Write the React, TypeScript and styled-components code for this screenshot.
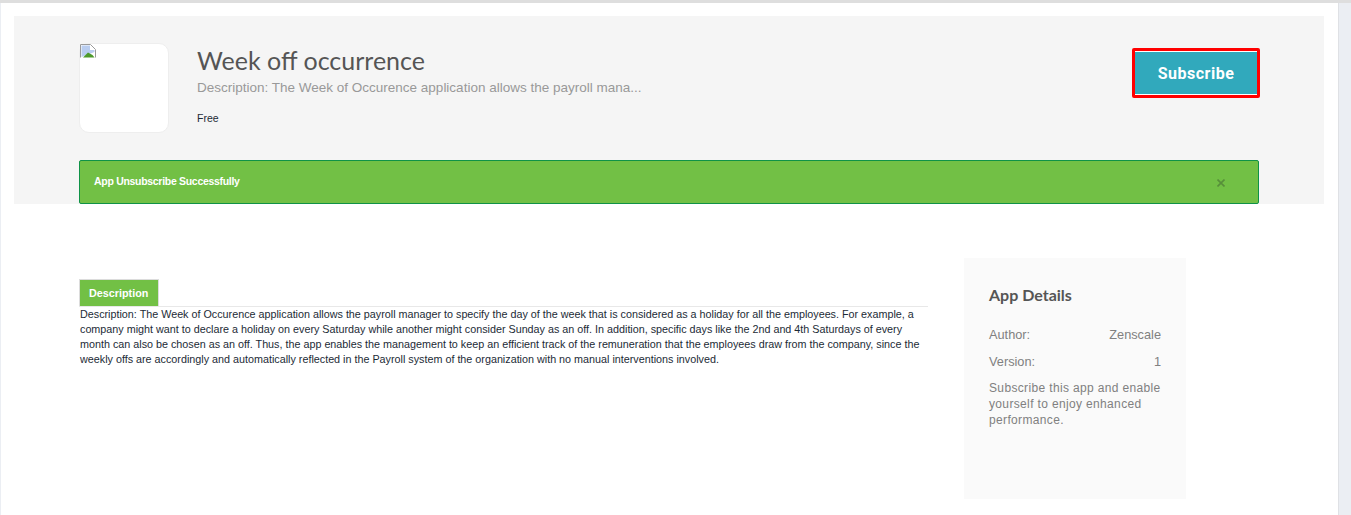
import styled, { createGlobalStyle } from "styled-components";
import { useState } from "react";

const GlobalStyle = createGlobalStyle`
  html, body {
    margin: 0;
    padding: 0;
    height: 515px;
    overflow: hidden;
    background: #ebeef3;
    font-family: "Liberation Sans", Arial, sans-serif;
  }
`;

const TopEdge = styled.div`
  height: 3px;
  background: #dedede;
`;

const Page = styled.div`
  width: 1338px;
  height: 512px;
  margin-left: 1px;
  box-sizing: border-box;
  padding: 13px 14px 0 13px;
  background: #fff;
  border-right: 1px solid #dfe1e5;
`;

const Hero = styled.section`
  height: 188px;
  box-sizing: border-box;
  padding: 27px 65px 0;
  background: #f5f5f5;
`;

const HeroRow = styled.div`
  display: flex;
  align-items: flex-start;
  height: 117px;
`;

const AppIcon = styled.div`
  width: 90px;
  height: 90px;
  flex: none;
  box-sizing: border-box;
  background: #fff;
  border: 1px solid #eeeeee;
  border-radius: 10px;
  margin-right: 28px;
`;

const AppInfo = styled.div`
  flex: 1;
  min-width: 0;
`;

const Title = styled.h1`
  margin: 1px 0 0;
  font-family: Lato, sans-serif;
  font-weight: 400;
  font-size: 25px;
  line-height: 32px;
  color: #555;
`;

const Summary = styled.p`
  margin: 2px 0 0;
  font-size: 13.5px;
  line-height: 20px;
  color: #999;
`;

const Price = styled.p`
  margin: 12px 0 0;
  font-size: 10.5px;
  line-height: 16px;
  color: #1c2b36;
`;

const SubscribeButton = styled.button`
  width: 128px;
  height: 50px;
  flex: none;
  margin: 5px -1px 0 0;
  box-sizing: border-box;
  padding: 0;
  border: 3px solid #ff0000;
  border-radius: 2px;
  background: #31a9bc;
  box-shadow: inset 0 1px 0 #fff, inset 0 -1px 0 #fff;
  color: #fff;
  font-family: Roboto, sans-serif;
  font-weight: 700;
  font-size: 16px;
  letter-spacing: 0.5px;
  cursor: pointer;
`;

const Alert = styled.div`
  height: 44px;
  box-sizing: border-box;
  display: flex;
  align-items: center;
  justify-content: space-between;
  padding: 0 33px 2px 14px;
  background: #72c045;
  border: 1px solid #0f9247;
  border-radius: 2px;
  color: #fff;
  font-size: 10.5px;
  letter-spacing: -0.3px;
  font-weight: 700;
`;

const CloseIcon = styled.svg`
  width: 8px;
  height: 8px;
  margin-top: 4px;
  stroke: #578f3a;
  stroke-width: 1.6;
`;

const Body = styled.div`
  display: flex;
  align-items: flex-start;
  padding: 54px 0 0 65px;
`;

const Main = styled.main`
  width: 849px;
  padding-top: 21px;
`;

const TabBar = styled.div`
  display: flex;
  border-bottom: 1px solid #e8e8e8;
`;

const Tab = styled.div`
  height: 27px;
  width: 80px;
  box-sizing: border-box;
  padding: 0 0 1px 9px;
  display: flex;
  align-items: center;
  background: #72c045;
  border: 1px solid #dcdcdc;
  border-bottom: none;
  color: #fff;
  font-size: 10.8px;
  font-weight: 700;
`;

const Text = styled.p`
  margin: 0;
  padding: 0 6px 0 1px;
  font-size: 10.78px;
  line-height: 15px;
  color: #1c2b36;
`;

const Sidebar = styled.aside`
  width: 222px;
  height: 241px;
  flex: none;
  box-sizing: border-box;
  margin-left: 36px;
  padding: 27px 25px 0;
  background: #fafafa;
`;

const SidebarTitle = styled.h2`
  margin: 0 0 22px;
  font-family: Lato, sans-serif;
  font-weight: 700;
  font-size: 16px;
  line-height: 20px;
  color: #555;
`;

const DetailRow = styled.div`
  display: flex;
  justify-content: space-between;
  margin-bottom: 11px;
  font-size: 12.75px;
  line-height: 16px;
  color: #808080;
`;

const Note = styled.p`
  margin: -1px -6px 0 0;
  font-size: 12px;
  line-height: 16px;
  letter-spacing: 0.35px;
  color: #808080;
`;

function BrokenImage() {
  return (
    <svg width="16" height="14" viewBox="0 0 16 14" style={{ display: "block" }}>
      <path d="M0 0H10.5L15.5 5V14H0Z" fill="#fff" />
      <path d="M0.5 13.5V0.5H10.5L15.5 5.5V13.5" fill="none" stroke="#9a9a9a" />
      <path d="M1.5 1.5H10V6H14.5V8L1.5 13Z" fill="#b9cdf0" />
      <path d="M3 13.5L8 8.5L12.5 11L14.5 13.5Z" fill="#4e9a2c" />
    </svg>
  );
}

export default function App() {
  const [showAlert] = useState(true);

  return (
    <>
      <GlobalStyle />
      <TopEdge />
      <Page>
        <Hero>
          <HeroRow>
            <AppIcon>
              <BrokenImage />
            </AppIcon>
            <AppInfo>
              <Title>Week off occurrence</Title>
              <Summary>
                Description: The Week of Occurence application allows the payroll mana...
              </Summary>
              <Price>Free</Price>
            </AppInfo>
            <SubscribeButton>Subscribe</SubscribeButton>
          </HeroRow>
          {showAlert && (
            <Alert>
              App Unsubscribe Successfully
              <CloseIcon viewBox="0 0 8 8">
                <path d="M0.5 0.5L7.5 7.5M7.5 0.5L0.5 7.5" />
              </CloseIcon>
            </Alert>
          )}
        </Hero>
        <Body>
          <Main>
            <TabBar>
              <Tab>Description</Tab>
            </TabBar>
            <Text>
              Description: The Week of Occurence application allows the payroll manager to specify
              the day of the week that is considered as a holiday for all the employees. For
              example, a company might want to declare a holiday on every Saturday while another
              might consider Sunday as an off. In addition, specific days like the 2nd and 4th
              Saturdays of every month can also be chosen as an off. Thus, the app enables the
              management to keep an efficient track of the remuneration that the employees draw
              from the company, since the weekly offs are accordingly and automatically reflected
              in the Payroll system of the organization with no manual interventions involved.
            </Text>
          </Main>
          <Sidebar>
            <SidebarTitle>App Details</SidebarTitle>
            <DetailRow>
              <span>Author:</span>
              <span>Zenscale</span>
            </DetailRow>
            <DetailRow>
              <span>Version:</span>
              <span>1</span>
            </DetailRow>
            <Note>Subscribe this app and enable yourself to enjoy enhanced performance.</Note>
          </Sidebar>
        </Body>
      </Page>
    </>
  );
}
